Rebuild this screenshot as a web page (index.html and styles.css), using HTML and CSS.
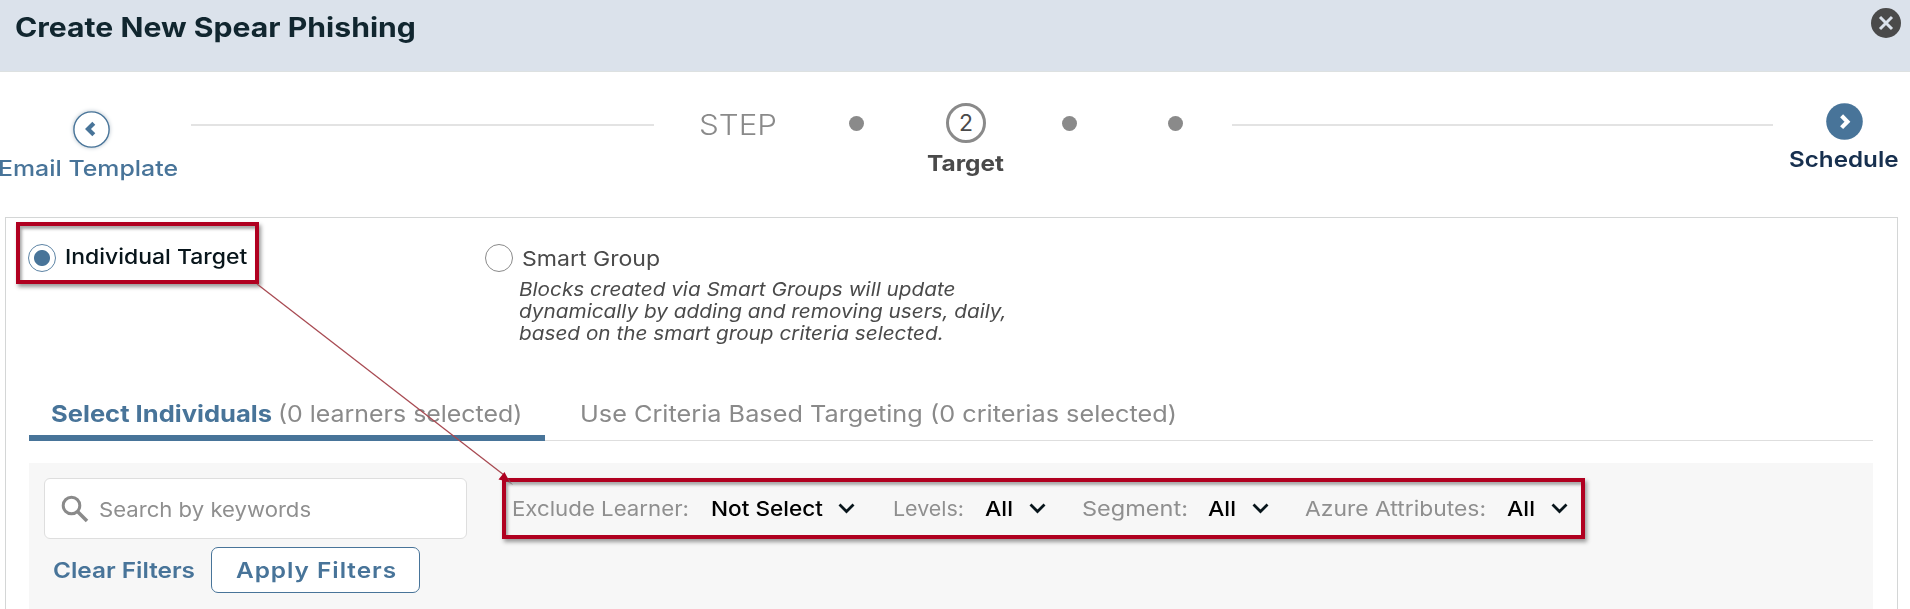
FILE: index.html
```html
<!DOCTYPE html>
<html lang="en">
<head>
<meta charset="utf-8">
<title>Create New Spear Phishing</title>
<link rel="stylesheet" href="styles.css">
</head>
<body>
<header class="header">
  <h1 class="title wide">Create New Spear Phishing</h1>
  <button class="close" aria-label="Close"><svg width="30" height="30" viewBox="0 0 30 30"><circle cx="15" cy="15" r="15" fill="#4a4a4a"/><path d="M9 9l12 12M21 9L9 21" stroke="#dbe2eb" stroke-width="3"/></svg></button>
</header>
<nav class="stepper">
  <a class="back"><svg class="round" width="45" height="45" viewBox="0 0 45 45"><circle cx="22.5" cy="22.5" r="17.6" fill="#fff" stroke="#487499" stroke-width="1.4"/><path d="M24.800 16.300l-5.800 5.700 5.800 5.700" fill="none" stroke="#487499" stroke-width="4.2"/></svg><span class="step-label back-label wide">Email Template</span></a>
  <i class="rule rule-left"></i>
  <span class="step-word wide">STEP</span>
  <i class="dot dot-first"></i>
  <div class="current"><span class="number">2</span><span class="step-label current-label wide">Target</span></div>
  <i class="dot dot-third"></i>
  <i class="dot dot-fourth"></i>
  <i class="rule rule-right"></i>
  <a class="next"><svg width="37" height="37" viewBox="0 0 37 37"><circle cx="18.5" cy="18.5" r="18.3" fill="#487499"/><path d="M15.6 12.800l5.800 5.900-5.800 5.900" fill="none" stroke="#fff" stroke-width="4.2"/></svg><span class="step-label next-label wide">Schedule</span></a>
</nav>
<main class="panel">
  <div class="targets">
    <label class="option individual"><i class="radio radio-on"></i><span class="option-text wide">Individual Target</span></label>
    <div class="group">
      <label class="option"><i class="radio"></i><span class="option-text smart wide">Smart Group</span></label>
      <p class="hint wide">Blocks created via Smart Groups will update<br>dynamically by adding and removing users, daily,<br>based on the smart group criteria selected.</p>
    </div>
  </div>
  <div class="tabs">
    <div class="tab tab-active"><b class="tab-name wide">Select Individuals</b><span class="tab-count wide">(0 learners selected)</span></div>
    <div class="tab"><span class="tab-criteria wide">Use Criteria Based Targeting (0 criterias selected)</span></div>
  </div>
  <section class="filters">
    <div class="filter-row">
      <div class="search"><svg width="28" height="28" viewBox="0 0 28 28"><circle cx="10.500" cy="10.500" r="8.300" fill="none" stroke="#8a8a8a" stroke-width="3"/><path d="M16.500 16.500l9.500 9.500" stroke="#8a8a8a" stroke-width="3.600"/></svg><span class="placeholder wide">Search by keywords</span></div>
      <div class="selects">
        <div class="select exclude"><span class="name wide">Exclude Learner:</span><span class="value wide">Not Select</span><svg class="chev" width="17" height="11" viewBox="0 0 17 11"><path d="M1.500 1.500l7 7 7-7"/></svg></div>
        <div class="select levels"><span class="name wide">Levels:</span><span class="value wide">All</span><svg class="chev" width="17" height="11" viewBox="0 0 17 11"><path d="M1.500 1.500l7 7 7-7"/></svg></div>
        <div class="select segment"><span class="name wide">Segment:</span><span class="value wide">All</span><svg class="chev" width="17" height="11" viewBox="0 0 17 11"><path d="M1.500 1.500l7 7 7-7"/></svg></div>
        <div class="select azure"><span class="name wide">Azure Attributes:</span><span class="value wide">All</span><svg class="chev" width="17" height="11" viewBox="0 0 17 11"><path d="M1.500 1.500l7 7 7-7"/></svg></div>
      </div>
    </div>
    <div class="actions"><a class="clear wide">Clear Filters</a><button class="apply"><span class="apply-text wide">Apply Filters</span></button></div>
  </section>
</main>
<svg class="arrow" width="270" height="215" viewBox="0 0 270 215"><path d="M2 3l247 191" stroke="#a84a52" stroke-width="1.3"/><path d="M250 193l8 11-11-6z" fill="#7d6a6c" opacity=".7"/><path d="M249.500 191l-6 7.500 11 2.500z" fill="#b00020"/></svg>
</body>
</html>
```
FILE: styles.css
```css
* { box-sizing: border-box; }
body {
  margin: 0;
  height: 609px;
  overflow: hidden;
  position: relative;
  display: flex;
  flex-direction: column;
  background: #fff;
  color: #4a4a4a;
  font-family: Inter, "Liberation Sans", sans-serif;
  white-space: nowrap;
}
svg, i { display: block; flex: none; }
button { padding: 0; border: 0; background: none; font: inherit; color: inherit; text-align: left; }

/* Extended letterforms: each text sets its own stretch in --k */
.wide { display: block; flex: none; transform: scaleX(var(--k)); transform-origin: 0 50%; }

.header {
  display: flex;
  justify-content: space-between;
  align-items: flex-start;
  height: 72px;
  flex: none;
  padding: 8px 9px 0 15px;
  background: #dbe2eb;
  border-bottom: 1px solid #dde1e1;
}
.title { --k: 1.117; margin: 4px 0 0; font-size: 27px; line-height: 32px; font-weight: 700; color: #11262f; }

.stepper { display: flex; align-items: flex-start; height: 145px; flex: none; }
.step-label { font-size: 22px; line-height: 24px; }
.back, .current, .next { display: flex; flex-direction: column; align-items: center; flex: none; }
.back { width: 182px; padding-top: 35px; }
.round { filter: drop-shadow(0 0 2px #b4c0ca); }
.back-label { --k: 1.131; width: 182px; margin: 4px 0 0 -4px; font-weight: 500; color: #487499; }
.rule { height: 2px; margin-top: 52px; background: #e3e3e3; }
.rule-left { width: 463px; margin-left: 9px; }
.rule-right { width: 541px; margin-left: 49px; }
.step-word { --k: 1.08; width: 101px; margin: 37px 0 0 45px; font-size: 29px; line-height: 31px; font-weight: 300; color: #8a8a8a; }
.dot { width: 15px; height: 15px; margin-top: 44px; border-radius: 50%; background: #8a8a8a; }
.dot-first { margin-left: 49px; }
.dot-third { margin-left: 56px; }
.dot-fourth { margin-left: 91px; }
.current { width: 80px; margin-left: 62px; padding-top: 31px; }
.number { width: 40px; height: 40px; border: 3px solid #8a8a8a; border-radius: 50%; font-size: 23px; line-height: 34px; text-align: center; }
.current-label { --k: 1.11; width: 79px; margin-top: 8px; font-weight: 700; }
.next { width: 112px; margin-left: 15px; padding-top: 31px; }
.next-label { --k: 1.1; width: 110px; margin-top: 7px; font-weight: 600; color: #17304f; }

.panel { flex: 1; margin: 0 12px 0 5px; padding: 4px 24px 0 10px; border: solid #d4d6d6; border-width: 1px 1px 0; }
.targets { display: flex; align-items: flex-start; height: 185px; }
.option { display: flex; align-items: center; }
.individual { width: 243px; height: 62px; padding: 9px 0 0 8px; border: 4px solid #b00020; box-shadow: 2px 3px 4px #999, inset 2px 3px 3px #aaa; }
.radio { width: 28px; height: 28px; border: 1.5px solid #8a8a8a; border-radius: 50%; background: #fff; }
.radio-on { border-color: #5d84a5; background: radial-gradient(circle, #487499 7.5px, #fff 8.5px); }
.option-text { --k: 1.12; margin: -1px 0 0 9px; font-size: 20.5px; line-height: 24px; font-weight: 500; color: #08151b; }
.group { margin: 22px 0 0 226px; }
.smart { --k: 1.125; margin-top: 1px; font-weight: 400; color: #4a4a4a; }
.hint { --k: 1.092; margin: 7px 0 0 34px; font-size: 19px; line-height: 22px; font-style: italic; }

.tabs { display: flex; height: 39px; margin: -5px 0 22px 13px; border-bottom: 1px solid #dedede; font-size: 23px; line-height: 24px; color: #8a8a8a; }
.tab { padding: 0 0 0 35px; }
.tab-active { display: flex; width: 516px; height: 39px; padding: 0 0 0 22px; border-bottom: 6px solid #487499; }
.tab-name { --k: 1.111; width: 227px; color: #487499; }
.tab-count { --k: 1.083; }
.tab-criteria { --k: 1.099; }

.filters { height: 147px; margin-left: 13px; padding: 15px 0 0 15px; background: #f7f7f7; }
.filter-row { display: flex; height: 61px; }
.search { display: flex; align-items: center; width: 423px; padding-left: 16px; background: #fff; border: 1.5px solid #dedede; border-radius: 6px; }
.placeholder { --k: 1.079; margin: 2px 0 0 10px; font-size: 20.5px; color: #8f8f8f; }
.selects { display: flex; align-items: center; width: 1083px; margin-left: 35px; padding-left: 6px; border: 4px solid #b00020; box-shadow: 2px 3px 4px #999, inset 2px 3px 3px #aaa; font-size: 20.5px; }
.select { display: flex; align-items: center; }
.name { color: #8f8f8f; }
.value { --k: 1.126; width: 44px; font-weight: 500; color: #000; }
.chev { fill: none; stroke: #08151b; stroke-width: 2.8; }
.exclude { width: 381px; }
.exclude .name { --k: 1.085; width: 199px; }
.exclude .value { --k: 1.102; width: 127px; }
.levels { width: 189px; }
.levels .name { --k: 1.046; width: 92px; }
.segment { width: 223px; }
.segment .name { --k: 1.148; width: 126px; }
.azure .name { --k: 1.116; width: 202px; }

.actions { display: flex; align-items: center; margin-top: 8px; font-size: 22px; font-weight: 600; color: #487499; }
.clear { --k: 1.107; width: 142px; margin-left: 9px; }
.apply { width: 209px; height: 46px; margin-left: 16px; padding-left: 24px; background: #fff; border: 1.5px solid #487499; border-radius: 7px; }
.apply-text { --k: 1.107; letter-spacing: .88px; }
.arrow { position: absolute; left: 255px; top: 281px; }
```
